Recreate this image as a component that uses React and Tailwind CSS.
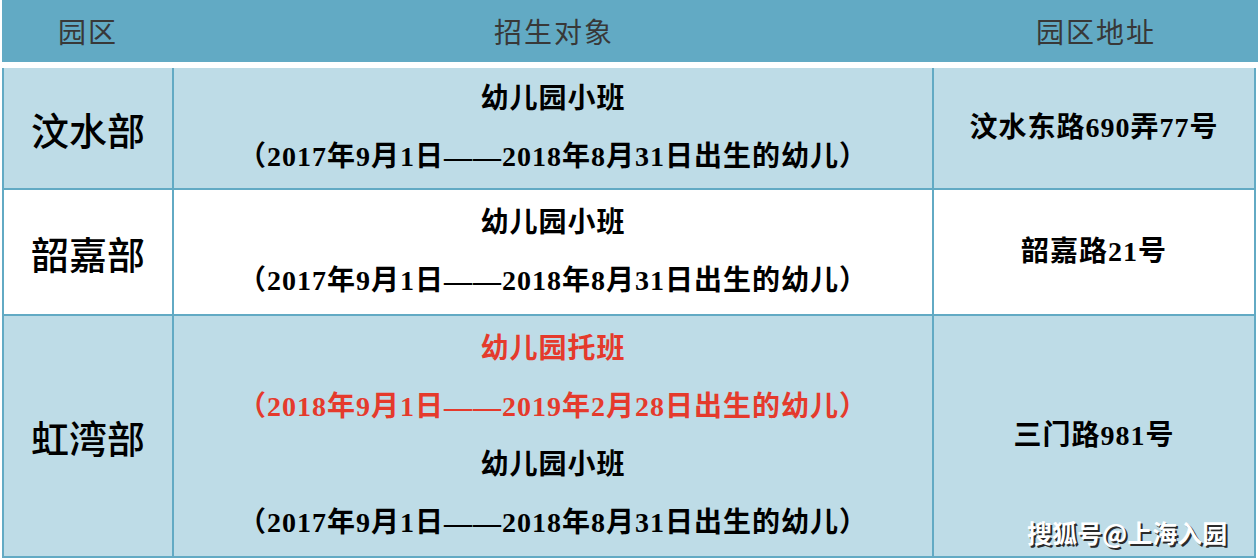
import React from 'react';

const serif = "font-['Liberation_Serif','Noto_Sans_CJK_SC',serif]";

const rows = [
  {
    name: '汶水部',
    bg: 'bg-[#bedce7]',
    h: 'h-[122px]',
    lines: [
      { text: '幼儿园小班' },
      { text: '（2017年9月1日——2018年8月31日出生的幼儿）' },
    ],
    address: '汶水东路690弄77号',
  },
  {
    name: '韶嘉部',
    bg: 'bg-white',
    h: 'h-[126px]',
    lines: [
      { text: '幼儿园小班' },
      { text: '（2017年9月1日——2018年8月31日出生的幼儿）' },
    ],
    address: '韶嘉路21号',
  },
  {
    name: '虹湾部',
    bg: 'bg-[#bedce7]',
    h: 'h-[242px]',
    lines: [
      { text: '幼儿园托班', red: true },
      { text: '（2018年9月1日——2019年2月28日出生的幼儿）', red: true },
      { text: '幼儿园小班' },
      { text: '（2017年9月1日——2018年8月31日出生的幼儿）' },
    ],
    address: '三门路981号',
  },
];

export default function App() {
  return (
    <div className="relative w-[1260px] h-[560px] bg-white overflow-hidden">
      {/* header */}
      <div className="ml-[2px] mr-[2px] h-[62px] bg-[#62aac4] flex items-center text-[#383838] text-[28px] font-['Noto_Sans_CJK_SC',sans-serif] tracking-[2px]">
        <div className="w-[172px] text-center">园区</div>
        <div className="w-[760px] text-center">招生对象</div>
        <div className="flex-1 text-center">园区地址</div>
      </div>

      {/* table */}
      <div className="mt-[6px] ml-[2px] w-[1254px] border-l-2 border-r-2 border-[#62aac4]">
        {rows.map((row, i) => (
          <div key={i} className={`flex border-b-2 border-[#62aac4] ${row.bg} ${row.h}`}>
            <div className="w-[170px] border-r-2 border-[#62aac4] flex items-center justify-center text-[38px] font-medium text-black font-['Noto_Sans_CJK_SC',sans-serif]">
              {row.name}
            </div>
            <div className={`w-[760px] border-r-2 border-[#62aac4] flex flex-col items-center justify-center font-bold text-[28px] tracking-[1px] ${serif}`}>
              {row.lines.map((l, j) => (
                <div key={j} className={`leading-[58px] ${l.red ? 'text-[#e53a2c]' : 'text-black'}`}>
                  {l.text}
                </div>
              ))}
            </div>
            <div className={`flex-1 flex items-center justify-center font-bold text-[28px] tracking-[1px] text-black ${serif}`}>
              {row.address}
            </div>
          </div>
        ))}
      </div>

      {/* watermark */}
      <div className="absolute left-[1027px] top-[514px] text-white text-[25px] font-bold font-['Noto_Sans_CJK_SC',sans-serif] [text-shadow:2px_2px_0_#2a2a2a]">
        搜狐号@上海入园
      </div>
    </div>
  );
}
